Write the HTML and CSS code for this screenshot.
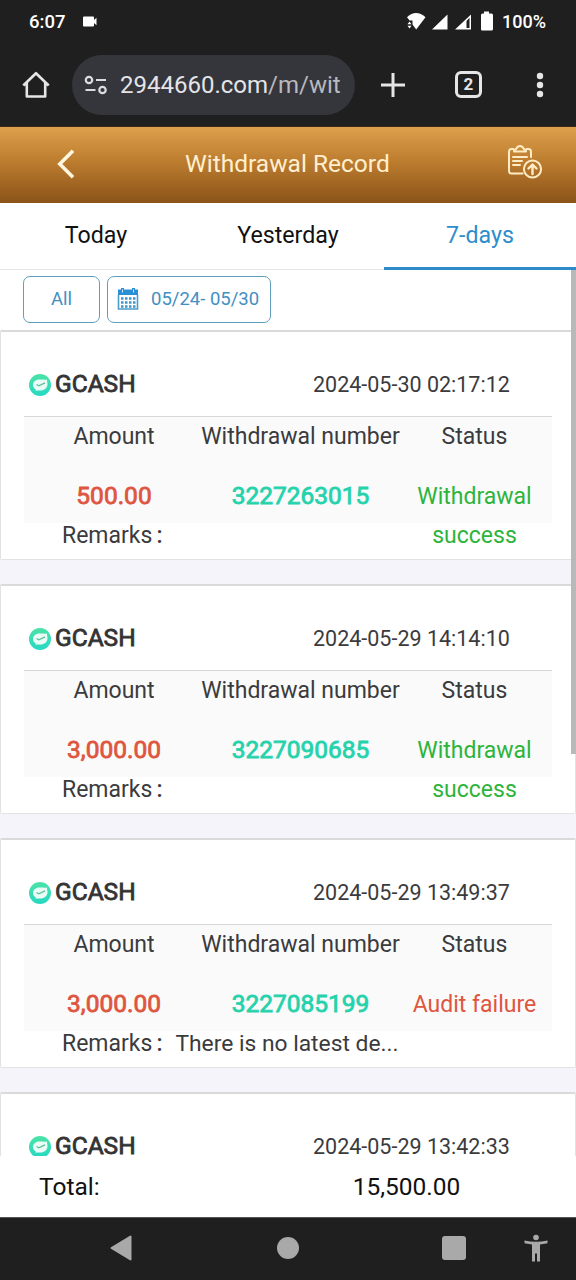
FILE: index.html
```html
<!DOCTYPE html>
<html lang="en">
<head>
<meta charset="utf-8">
<title>Withdrawal Record</title>
<link rel="stylesheet" href="styles.css">
</head>
<body>
<svg class="defs" width="0" height="0">
  <defs>
    <linearGradient id="mint" x1="0" y1="0" x2="0" y2="1"><stop offset="0" stop-color="#4be3a6"/><stop offset="1" stop-color="#27d8c4"/></linearGradient>
    <symbol id="gcash" viewBox="0 0 22 22">
      <circle cx="11" cy="11" r="11" fill="url(#mint)"/>
      <path d="M4 11C4 7.500 7 5.500 11 5.500c3 0 5 .5 7 0-.2 1.500.5 3 .5 4.500 0 4-3 6.500-7.500 6.500-1.500 0-2.500-.2-4.500.3l.2-1.600C5 14.300 4 12.700 4 11z" fill="#e9fdf6"/>
      <path d="M7.500 10.500l2.300 1.300 6.200-3" fill="none" stroke="#5cbf9f" stroke-width="1.300"/>
    </symbol>
  </defs>
</svg>
<div class="screen">
  <div class="statusbar">
    <span class="clock">6:07</span>
    <svg class="cam" width="14" height="11" viewBox="0 0 14 11"><path d="M1 .5h9q1 0 1 1V4l2.500-2.300v7.600L11 7v2.500q0 1-1 1H1q-1 0-1-1v-8q0-1 1-1z" fill="#fff"/></svg>
    <svg class="signals" width="88" height="22" viewBox="0 0 88 22" fill="#fff">
      <path d="M1 6.200Q10-2.200 19.500 6.200L10.200 18.500 6.500 13.500V9.500H3.600z"/>
      <path d="M3.500 10.500l2 2.700h-4zM3.500 17.500l2-2.700h-4z"/>
      <path d="M26 18.500h15.500V3.500z"/>
      <path fill-rule="evenodd" d="M49 18.500h16V3.500zm11.500-1.500V10l3-3.200V17z"/>
      <path d="M78 .5h5v2h2.500q1.500 0 1.500 1.500V18q0 1.500-1.500 1.500h-9.500Q75 19.500 75 18V4Q75 2.500 76.500 2.500H78z"/>
    </svg>
    <span class="level">100%</span>
  </div>
  <div class="browserbar">
    <svg class="home" width="28" height="28" viewBox="0 0 28 28" fill="none" stroke="#e6e6e8" stroke-width="2.600"><path d="M1.300 14.500L14 2.200l12.700 12.300M4.800 11.800V25.500h18.400V11.800" stroke-linejoin="round"/></svg>
    <div class="urlbox">
      <svg width="24" height="20" viewBox="0 0 24 20" fill="none" stroke="#dcdce0" stroke-width="2.200"><circle cx="5" cy="5" r="3.200"/><path d="M12 5h10M1.500 15h10"/><circle cx="18.500" cy="15" r="3.200"/></svg>
      <span class="url">2944660.com<span class="path">/m/wit</span></span>
    </div>
    <svg class="plus" width="24" height="24" viewBox="0 0 24 24"><path d="M0 12h24M12 0v24" stroke="#e6e6e8" stroke-width="3"/></svg>
    <span class="tabcount">2</span>
    <svg class="more" width="8" height="26" viewBox="0 0 8 26" fill="#e6e6e8"><circle cx="4" cy="4" r="3.200"/><circle cx="4" cy="13" r="3.200"/><circle cx="4" cy="22" r="3.200"/></svg>
  </div>
  <header class="titlebar">
    <svg class="back" width="18" height="30" viewBox="0 0 18 30"><path d="M16 1.800L2.800 15 16 28.200" fill="none" stroke="#fff6e0" stroke-width="3.600"/></svg>
    <h1>Withdrawal Record</h1>
    <svg class="clip" width="36" height="36" viewBox="0 0 36 36" fill="none" stroke="#ffebc4" stroke-width="2" stroke-linecap="round" stroke-linejoin="round">
      <path d="M6.500 4H4.500Q2 4 2 6.500V26q0 2.500 2.500 2.500h11M19.500 4h2Q24 4 24 6.500V12"/>
      <path d="M7 6.500Q7 4.500 9 4.200 10.500 1 13 1t4 3.200q2 .3 2 2.300z"/>
      <path d="M6 12h14M6 16h9M6 20h7"/>
      <circle cx="25.500" cy="24" r="8.600"/>
      <path d="M25.500 29v-9M21.500 23.500l4-4 4 4" stroke-width="2.400"/>
    </svg>
  </header>
  <nav class="tabs"><span>Today</span><span>Yesterday</span><span class="on">7-days</span></nav>
  <div class="list">
    <div class="filters">
      <span class="pill all">All</span>
      <span class="pill range">
        <svg width="22" height="24" viewBox="0 0 22 24"><path d="M1 2.500h3V1h3v1.500h8V1h3v1.500h3V9H1z" fill="#2b8fd6"/><path d="M1.500 8v14h19V8" fill="#fff" stroke="#4a9dcc" stroke-width="1.600"/><path d="M4 11.500h15M4 15.500h15M4 19.500h15" stroke="#3f95c8" stroke-width="2.500" stroke-dasharray="2.500 1.500"/><path d="M5.500 2.500v3M16.500 2.500v3" stroke="#fff" stroke-width=".8"/></svg>
        <span>05/24- 05/30</span>
      </span>
    </div>
    <article class="card">
      <div class="head"><svg class="logo" width="22" height="22"><use href="#gcash"/></svg><b>GCASH</b><time>2024-05-30 02:17:12</time></div>
      <div class="grid"><span>Amount</span><span class="wn">Withdrawal number</span><span>Status</span><b class="amt">500.00</b><b class="num">3227263015</b><span class="state ok">Withdrawal success</span></div>
      <div class="remarks"><span>Remarks<i>:</i></span></div>
    </article>
    <article class="card">
      <div class="head"><svg class="logo" width="22" height="22"><use href="#gcash"/></svg><b>GCASH</b><time>2024-05-29 14:14:10</time></div>
      <div class="grid"><span>Amount</span><span class="wn">Withdrawal number</span><span>Status</span><b class="amt">3,000.00</b><b class="num">3227090685</b><span class="state ok">Withdrawal success</span></div>
      <div class="remarks"><span>Remarks<i>:</i></span></div>
    </article>
    <article class="card">
      <div class="head"><svg class="logo" width="22" height="22"><use href="#gcash"/></svg><b>GCASH</b><time>2024-05-29 13:49:37</time></div>
      <div class="grid"><span>Amount</span><span class="wn">Withdrawal number</span><span>Status</span><b class="amt">3,000.00</b><b class="num">3227085199</b><span class="state bad">Audit failure</span></div>
      <div class="remarks"><span>Remarks<i>:</i></span><span class="note">There is no latest de...</span></div>
    </article>
    <article class="card last">
      <div class="head"><svg class="logo" width="22" height="22"><use href="#gcash"/></svg><b>GCASH</b><time>2024-05-29 13:42:33</time></div>
    </article>
    <div class="scrollbar"></div>
  </div>
  <div class="total"><span>Total:</span><span class="sum">15,500.00</span></div>
  <div class="navbar">
    <svg class="n-back" width="22" height="26" viewBox="0 0 22 26"><path d="M20.500 1.500v23L1.500 13z" fill="#a9a9a9" stroke="#a9a9a9" stroke-width="2" stroke-linejoin="round"/></svg>
    <span class="n-home"></span>
    <span class="n-recent"></span>
    <svg class="n-acc" width="24" height="28" viewBox="0 0 24 28" fill="#a9a9a9"><circle cx="12" cy="3.500" r="2.800"/><path d="M.5 6.500Q12 9 23.500 6.500V9.300L16 10.500V27.500H13V19.500H11V27.500H8V10.500L.5 9.300z"/></svg>
  </div>
</div>
</body>
</html>
```
FILE: styles.css
```css
* { box-sizing: border-box; }
body { margin: 0; font-family: Roboto, "Liberation Sans", sans-serif; background: #fff; }
.defs { display: block; height: 0; }
svg { display: block; flex: none; }
.screen { width: 576px; height: 1280px; display: flex; flex-direction: column; overflow: hidden; }
.screen > * { flex: none; }

.statusbar { height: 43px; background: #1f1f1f; color: #fff; display: flex; align-items: center; padding-left: 29px; font-size: 18.500px; font-weight: 500; }
.clock { width: 54px; }
.signals { margin-left: 309px; }
.level { margin-left: 8px; font-size: 18px; }

.browserbar { height: 84px; background: #1f1f1f; display: flex; align-items: center; padding-left: 22px; border-bottom: 1px solid #3a2a1c; }
.urlbox { width: 283px; height: 60px; margin-left: 22px; border-radius: 30px; background: #35353c; display: flex; align-items: center; padding-left: 12px; gap: 12px; }
.url { font-size: 24px; color: #e4e4e7; white-space: nowrap; }
.path { color: #b9b9be; }
.plus { margin-left: 26px; }
.tabcount { width: 27px; height: 27px; margin-left: 50px; border: 3px solid #e6e6e8; border-radius: 6px; color: #e6e6e8; font-size: 17px; font-weight: 700; line-height: 21px; text-align: center; }
.more { margin-left: 54px; }

.titlebar { height: 76px; display: flex; align-items: center; padding-left: 57px; background: linear-gradient(#dda04c, #bd7d2f 45%, #8a5319); color: #ffefd0; }
.back { margin-bottom: 2px; }
h1 { margin: 0 0 3px 110px; width: 206px; font-size: 24.500px; font-weight: 400; white-space: nowrap; }
.clip { margin: 0 0 4px 116px; }

.tabs { height: 67px; display: grid; grid-template-columns: repeat(3, 1fr); text-align: center; font-size: 23.200px; line-height: 64px; color: #111; border-bottom: 1px solid #e6e6e6; }
.tabs .on { color: #2e8dcb; height: 67px; border-bottom: 3px solid #2e8bca; }

.list { position: relative; height: 886px; overflow: hidden; background: #f4f4fa; }
.filters { height: 60px; padding: 6px 23px; display: flex; gap: 7px; background: #fff; }
.pill { height: 47px; padding-bottom: 2px; border: 1px solid #5f9fbb; border-radius: 7px; color: #428fc2; font-size: 18.500px; display: flex; align-items: center; }
.all { width: 77px; justify-content: center; }
.range { width: 164px; padding-left: 9px; gap: 12px; white-space: nowrap; }

.card { height: 230px; margin-bottom: 24px; padding: 0 23px; border: 1px solid #e2e2e4; border-top: 2px solid #dadadb; border-radius: 2px; background: #fff; color: #3b3b3d; font-size: 23px; }
.last { height: 66px; margin: 0; border-bottom: 0; }
.head { height: 85px; padding: 20px 0 0 5px; display: flex; align-items: center; line-height: 18px; border-bottom: 1px solid #d8d8d8; }
.last .head { border-bottom-color: transparent; }
.head b { margin-left: 4px; width: 258px; font-size: 24.500px; color: #333; }
.head time { padding-top: 1px; font-size: 21.500px; white-space: nowrap; }
b { font-weight: 400; -webkit-text-stroke: .8px currentColor; }
.logo { margin-top: 1px; }
.grid { height: 106px; display: grid; grid-template-columns: 180px 193px 155px; grid-template-rows: 40px 39px; row-gap: 20px; text-align: center; line-height: 39px; background: #fafafa; }
.wn { white-space: nowrap; margin: 0 -10px; }
.amt, .num { font-size: 24.500px; line-height: 37px; }
.amt { color: #de5540; }
.num { color: #25d2ac; }
.ok { color: #2eb43a; }
.bad { color: #df5540; }
.remarks { height: 24px; padding-left: 38px; display: flex; align-items: center; white-space: nowrap; }
.remarks i { font-style: normal; font-weight: 500; margin-left: 4px; }
.note { margin-left: 13px; font-size: 22.800px; }
.scrollbar { position: absolute; right: 0; top: 0; width: 5px; height: 484px; background: #b9b9bb; }

.total { height: 61px; padding-left: 39px; display: flex; align-items: center; background: #fff; color: #111; font-size: 24.500px; }
.sum { margin-left: 253px; }

.navbar { height: 63px; padding: 0 0 2px 110px; display: flex; align-items: center; background: #1f1f1f; border-top: 1px solid #555; }
.n-home { width: 22px; height: 22px; margin-left: 145px; border-radius: 50%; background: #a9a9a9; }
.n-recent { width: 24px; height: 24px; margin-left: 143px; border-radius: 3px; background: #a9a9a9; }
.n-acc { margin-left: 58px; }
```
